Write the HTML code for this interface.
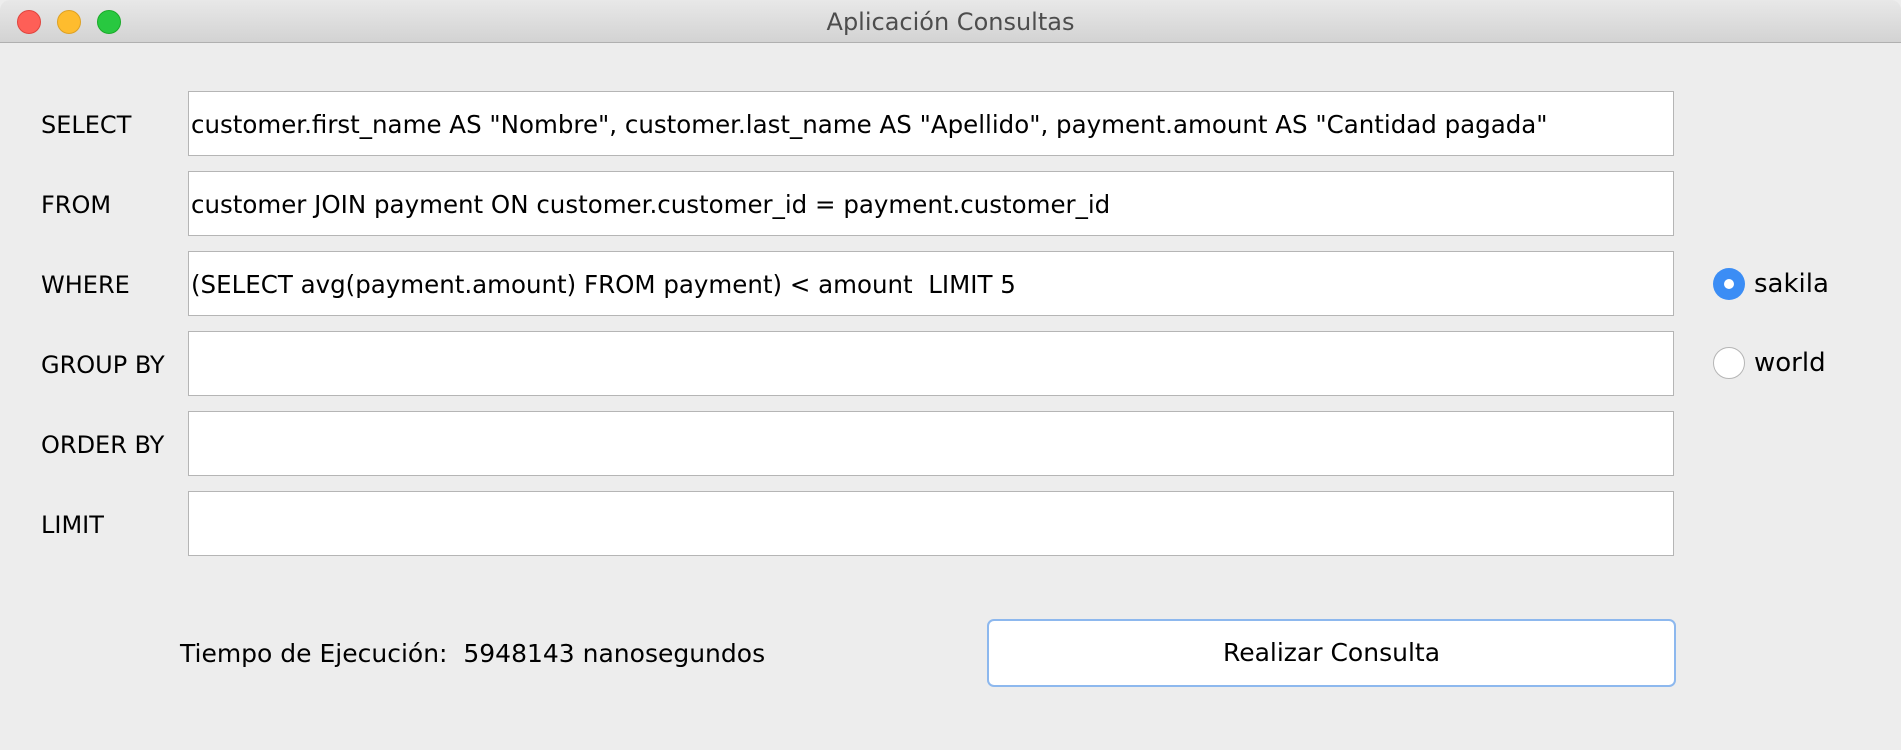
<!DOCTYPE html>
<html><head><meta charset="utf-8"><style>
html,body{margin:0;padding:0;width:1901px;height:750px;overflow:hidden;background:#ededed;font-family:"DejaVu Sans","Liberation Sans",sans-serif;}
.title{position:absolute;left:0;top:0;width:1901px;height:43px;background:linear-gradient(#e8e8e8,#d3d3d3);border-bottom:1px solid #b0b0b0;box-sizing:border-box;border-radius:10px 10px 0 0;}
.title .t{position:absolute;left:0;width:1901px;top:8px;text-align:center;font-size:24px;color:#4d4d4d;}
.dot{position:absolute;top:10px;width:24px;height:24px;border-radius:50%;box-sizing:border-box;}
.lbl{position:absolute;left:41px;font-size:24px;color:#000;line-height:30px;}
.fld{position:absolute;left:188px;width:1486px;height:65px;background:#fff;border:1px solid #b5b5b5;box-sizing:border-box;font-size:24.5px;line-height:66px;padding-left:2px;white-space:nowrap;color:#000;}
.radio{position:absolute;left:1713px;width:32px;height:32px;border-radius:50%;box-sizing:border-box;}
.rl{position:absolute;left:1754px;font-size:26px;line-height:32px;}
.btn{position:absolute;left:987px;top:619px;width:689px;height:68px;background:#fff;border:2px solid #8db8ee;border-radius:7px;box-sizing:border-box;text-align:center;font-size:25px;line-height:64px;}
</style></head><body>
<div class="title"><div class="t">Aplicación Consultas</div>
<div class="dot" style="left:17px;background:#fe5f57;border:1px solid #e0443e"></div>
<div class="dot" style="left:57px;background:#febc2e;border:1px solid #dea123"></div>
<div class="dot" style="left:97px;background:#28c840;border:1px solid #1aab29"></div>
</div>
<div class="lbl" style="top:110px">SELECT</div>
<div class="lbl" style="top:190px">FROM</div>
<div class="lbl" style="top:270px">WHERE</div>
<div class="lbl" style="top:350px">GROUP BY</div>
<div class="lbl" style="top:430px">ORDER BY</div>
<div class="lbl" style="top:510px">LIMIT</div>
<div class="fld" style="top:91px">customer.first_name AS "Nombre", customer.last_name AS "Apellido", payment.amount AS "Cantidad pagada"</div>
<div class="fld" style="top:171px">customer JOIN payment ON customer.customer_id = payment.customer_id</div>
<div class="fld" style="top:251px">(SELECT avg(payment.amount) FROM payment) &lt; amount&nbsp; LIMIT 5</div>
<div class="fld" style="top:331px"></div>
<div class="fld" style="top:411px"></div>
<div class="fld" style="top:491px"></div>
<div class="radio" style="top:268px;background:#3b8df5"><div style="position:absolute;left:11px;top:11px;width:10px;height:10px;border-radius:50%;background:#fff"></div></div>
<div class="rl" style="top:268px">sakila</div>
<div class="radio" style="top:347px;background:#fff;border:1px solid #b5b5b5"></div>
<div class="rl" style="top:347px">world</div>
<div class="lbl" style="left:180px;top:639px;font-size:25px">Tiempo de Ejecución:&nbsp; 5948143 nanosegundos</div>
<div class="btn">Realizar Consulta</div>
</body></html>
